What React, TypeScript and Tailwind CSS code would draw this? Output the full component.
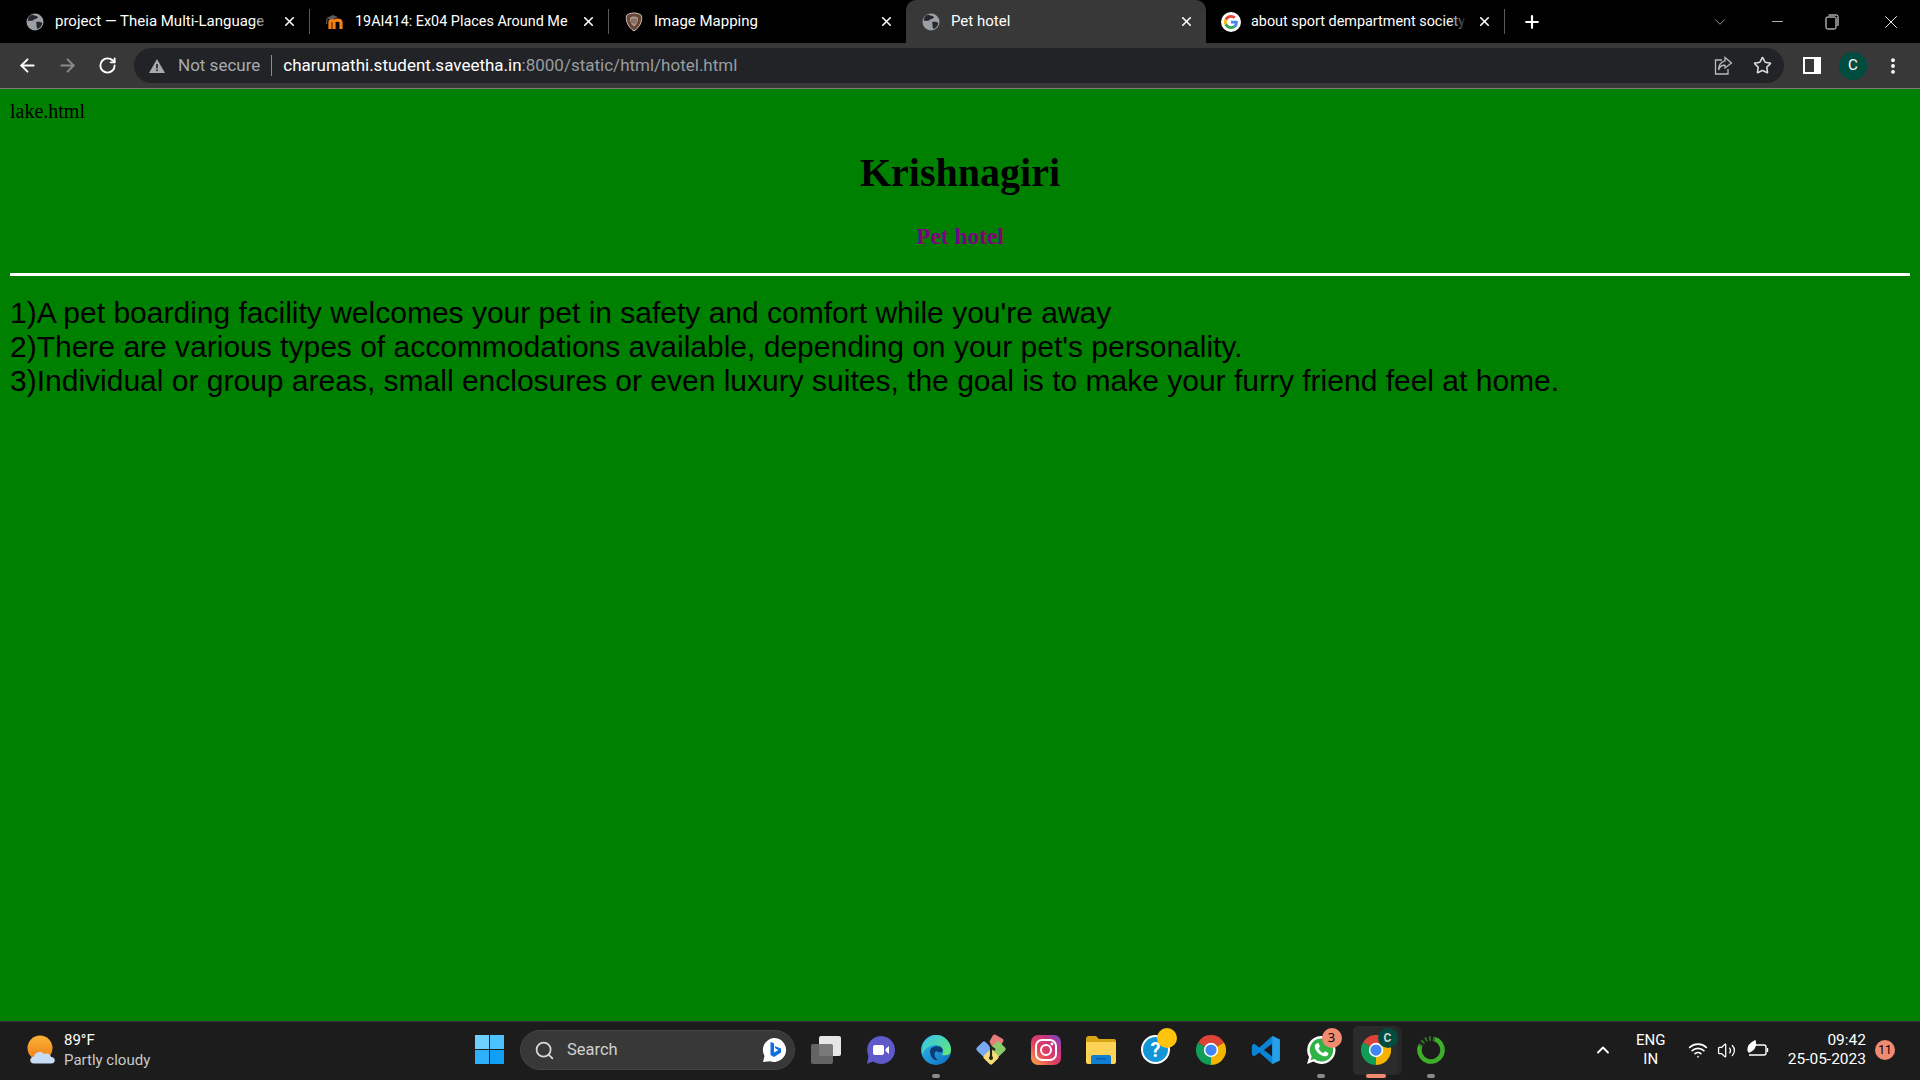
import React from "react";
import { ArrowLeft, ArrowRight, RotateCw, Star, X, Plus, ChevronDown, Minus, ChevronUp, Search, MoreVertical, Wifi, Volume2 } from "lucide-react";

const Globe = () => (
  <svg width="18" height="18" viewBox="0 0 18 18">
    <circle cx="9" cy="9" r="8.5" fill="#9aa0a6" />
    <path d="M6 1.5 C8 3 11 2.5 12 4 C11.5 6 9 5.5 7.5 7 C6 8.5 4 7.5 2 8 C1.5 5 3.5 2.5 6 1.5Z" fill="#26282b" />
    <path d="M10 9 C12 8.5 15 9 16.3 10 C16 13 14 15 11.5 16 C10 14 11 11.5 10 9Z" fill="#26282b" />
  </svg>
);
const Moodle = () => (
  <svg width="20" height="18" viewBox="0 0 20 18">
    <path d="M1 5 L8 2 L13 4 L7 7Z" fill="#5a5a5a" />
    <path d="M2 6 L1.5 11" stroke="#6b6b6b" strokeWidth="1" />
    <path d="M5 16 V9 C5 7 9 7 9 9 V16 M9 9 C9 6.5 16 6.5 16 9.5 V16" fill="none" stroke="#f98012" strokeWidth="3.2" />
  </svg>
);
const Shield = () => (
  <svg width="18" height="20" viewBox="0 0 18 20">
    <path d="M9 1 C12 1 15 2 16.5 3.5 C17.5 9 15 15 9 19 C3 15 .5 9 1.5 3.5 C3 2 6 1 9 1Z" fill="#6a4436" stroke="#cfc6c0" strokeWidth="1" />
    <path d="M9 4.5 C11 4.5 12.5 5 13 6 C13.5 9 12 12 9 14.5 C6 12 4.5 9 5 6 C5.5 5 7 4.5 9 4.5Z" fill="#a99a92" />
    <path d="M7 6.5 V11 M9 6.5 V12 M11 6.5 V11" stroke="#6a4436" strokeWidth="1" />
  </svg>
);
const GoogleG = () => (
  <svg width="20" height="20" viewBox="0 0 48 48">
    <circle cx="24" cy="24" r="24" fill="#fff" />
    <g transform="translate(7 7) scale(.708)">
      <path fill="#EA4335" d="M24 9.5c3.5 0 6.7 1.2 9.2 3.6l6.9-6.9C35.9 2.4 30.5 0 24 0 14.6 0 6.5 5.4 2.6 13.2l8 6.2C12.4 13.7 17.7 9.5 24 9.5z" />
      <path fill="#4285F4" d="M46.98 24.55c0-1.57-.15-3.09-.38-4.55H24v9.02h12.94c-.58 2.96-2.26 5.48-4.78 7.18l7.73 6c4.51-4.18 7.09-10.36 7.09-17.65z" />
      <path fill="#FBBC05" d="M10.53 28.59c-.48-1.45-.76-2.99-.76-4.59s.27-3.14.76-4.59l-7.98-6.19C.92 16.46 0 20.12 0 24c0 3.88.92 7.54 2.56 10.78l7.97-6.19z" />
      <path fill="#34A853" d="M24 48c6.48 0 11.93-2.13 15.89-5.81l-7.73-6c-2.15 1.45-4.92 2.3-8.16 2.3-6.26 0-11.57-4.22-13.47-9.91l-7.98 6.19C6.51 42.62 14.62 48 24 48z" />
    </g>
  </svg>
);
const ChromeIcon = ({ size = 30 }: { size?: number }) => (
  <svg width={size} height={size} viewBox="0 0 48 48">
    <path fill="#db4437" d="M24 24 L44.8 12 A24 24 0 0 0 3.2 12 Z" />
    <path fill="#0f9d58" d="M24 24 L3.2 12 A24 24 0 0 0 24 48 Z" />
    <path fill="#f4b400" d="M24 24 L24 48 A24 24 0 0 0 44.8 12 Z" />
    <circle cx="24" cy="24" r="11.5" fill="#fff" />
    <circle cx="24" cy="24" r="9" fill="#4285f4" />
  </svg>
);
const Sep = () => <div className="w-px h-[25px] bg-[#5a5a5a] shrink-0" />;

function Tab({ icon, title, active, fade, width, small }: { icon: React.ReactNode; title: string; active?: boolean; fade?: boolean; width: string; small?: boolean }) {
  return (
    <div className={`relative flex items-center h-[43px] shrink-0 ${width} pl-[14px] pr-[12px] ${active ? "bg-[#383838] rounded-t-[10px]" : ""}`}>
      <div className="w-[22px] flex justify-center shrink-0">{icon}</div>
      <div className={`relative ml-[9px] flex-1 overflow-hidden whitespace-nowrap text-white ${small ? "text-[14.4px]" : "text-[15px]"}`}>
        {title}
        {fade && <div className="absolute right-0 top-0 bottom-0 w-[18px] bg-gradient-to-r from-transparent to-black" />}
      </div>
      <X size={15} strokeWidth={2.6} className="ml-[10px] shrink-0 text-white" />
    </div>
  );
}

function Cell({ children, dot, accent }: { children: React.ReactNode; dot?: boolean; accent?: boolean }) {
  return (
    <div className="relative flex items-center justify-center w-[55px] h-[58px] pb-[3px] shrink-0">
      {accent && <div className="absolute left-[5px] top-[4px] w-[45px] h-[49px] rounded-[5px] bg-[#2b2b2b] shadow-[4px_0_0_#262626]" />}
      <div className="relative flex items-center justify-center">{children}</div>
      {dot && <div className="absolute bottom-[2px] left-[23.5px] w-[8px] h-[4px] rounded-full bg-[#8a8a8a]" />}
      {accent && <div className="absolute bottom-[2px] left-[17.5px] w-[20px] h-[4px] rounded-full bg-[#f08a70]" />}
    </div>
  );
}

export default function App() {
  return (
    <div className="flex flex-col w-[1920px] h-[1080px] overflow-hidden font-['Roboto',sans-serif]">
      {/* tab strip */}
      <div className="flex items-center h-[43px] bg-black shrink-0 pl-[10px]">
        <Tab width="w-[299px]" icon={<Globe />} title="project — Theia Multi-Language" fade />
        <Sep />
        <Tab width="w-[298px]" icon={<Moodle />} title="19AI414: Ex04 Places Around Me" small />
        <Sep />
        <Tab width="w-[297px]" icon={<Shield />} title="Image Mapping" />
        <Tab width="w-[300px]" icon={<Globe />} title="Pet hotel" active />
        <Tab width="w-[298px]" icon={<GoogleG />} title="about sport dempartment society" small fade />
        <Sep />
        <Plus size={20} strokeWidth={2.6} className="ml-[17px] text-white" />
        <div className="flex-1" />
        <ChevronDown size={18} strokeWidth={1} className="text-[#c8c8c8] mr-[40px]" />
        <Minus size={17} strokeWidth={1} className="text-white mr-[39px]" />
        <svg width="14" height="16" viewBox="0 0 14 16" className="mr-[41px]" fill="none" stroke="#fff" strokeWidth="1">
          <rect x="1" y="3" width="10" height="12" rx="1.5" />
          <path d="M3.5 1 H11.5 Q13 1 13 2.5 V12" />
        </svg>
        <X size={22} strokeWidth={1} className="text-white mr-[18px]" />
      </div>

      {/* toolbar */}
      <div className="flex items-center h-[45px] bg-[#383838] shrink-0">
        <ArrowLeft size={21} strokeWidth={2.2} className="ml-[17px] text-white" />
        <ArrowRight size={21} strokeWidth={2.2} className="ml-[19px] text-[#8b8b8b]" />
        <RotateCw size={19} strokeWidth={2.4} className="ml-[20px] text-white" />
        <div className="flex items-center ml-[17px] w-[1650px] h-[35px] rounded-full bg-[#212327] shrink-0">
          <svg width="16" height="14" viewBox="0 0 16 14" className="ml-[15px]">
            <path d="M8 0 L16 14 H0Z" fill="#a8abae" />
            <rect x="7.2" y="5" width="1.6" height="4.5" fill="#212327" />
            <rect x="7.2" y="10.5" width="1.6" height="1.6" fill="#212327" />
          </svg>
          <span className="ml-[13px] text-[17px] text-[#a8abae]">Not secure</span>
          <div className="ml-[11px] w-px h-[21px] bg-[#8b8d90]" />
          <span className="ml-[11px] text-[17px] text-white">
            charumathi.student.saveetha.in<span className="text-[#9a9da0]">:8000/static/html/hotel.html</span>
          </span>
          <div className="flex-1" />
          <svg width="20" height="20" viewBox="0 0 20 20" fill="none" stroke="#b8babc" strokeWidth="1.3" className="mr-[20px]">
            <path d="M9 4 H2.5 V18 H15 V13" />
            <path d="M12 1.5 L18.5 7 L12 12 V9.3 C8.5 9 6.5 11 5.5 14 C5.5 9.5 8 5.5 12 4.8Z" />
          </svg>
          <Star size={19} strokeWidth={2} className="mr-[12px] text-[#dcdcdc]" />
        </div>
        <div className="ml-[19px] w-[18px] h-[17px] bg-white flex items-center pl-[2px] shrink-0">
          <div className="w-[9px] h-[13px] bg-[#383838]" />
        </div>
        <div className="ml-[18px] w-[28px] h-[28px] rounded-full bg-[#004d40] flex items-center justify-center text-[15px] text-white shrink-0">C</div>
        <MoreVertical size={20} strokeWidth={2.6} className="ml-[16px] text-white shrink-0" />
      </div>
      <div className="h-px bg-[#7a7a7a] shrink-0" />

      {/* page */}
      <div className="flex-1 bg-[#008000] px-[10px] pt-[7px] font-['Liberation_Serif',serif] text-[20px] text-black">
        <div>lake.html</div>
        <h1 className="text-center font-bold text-[40px] mt-[17px] mb-[16px]">Krishnagiri</h1>
        <h3 className="text-center font-bold text-[23.4px] text-[#800080] mb-[19px]">Pet hotel</h3>
        <div className="h-[3px] bg-white" />
        <p className="mt-[20px] font-['Liberation_Sans',sans-serif] text-[30px] leading-[34px]">
          1)A pet boarding facility welcomes your pet in safety and comfort while you're away
          <br />
          2)There are various types of accommodations available, depending on your pet's personality.
          <br />
          3)Individual or group areas, small enclosures or even luxury suites, the goal is to make your furry friend feel at home.
        </p>
      </div>

      {/* taskbar */}
      <div className="flex items-center h-[59px] bg-[#1c1c1c] shrink-0 border-t border-[#333333]">
        <div className="flex items-center w-[462px] shrink-0 pl-[27px] mb-[2px]">
          <svg width="30" height="30" viewBox="0 0 30 30">
            <defs>
              <linearGradient id="sun" x1="0" y1="0" x2="0" y2="1">
                <stop offset="0" stopColor="#f9b233" />
                <stop offset="1" stopColor="#ee7e1c" />
              </linearGradient>
            </defs>
            <circle cx="13" cy="13" r="12.5" fill="url(#sun)" />
            <path d="M7 28.5 C2 28.5 2 22 7 21.5 C8 17 14 15.5 17 19 C20 17.5 24 19.5 24 22 C29 22 29 28.5 24.5 28.5Z" fill="#c9dcf6" />
          </svg>
          <div className="ml-[7px] flex flex-col text-[15px] leading-[20px]">
            <span className="text-white">89°F</span>
            <span className="text-[#c9c9c9]">Partly cloudy</span>
          </div>
        </div>
        <Cell>
          <div className="grid grid-cols-2 gap-[1.5px] w-[29px] h-[29px]">
            <div className="bg-[#6fd0ff]" />
            <div className="bg-[#4cc2ff]" />
            <div className="bg-[#2fb0fb]" />
            <div className="bg-[#0fa0f5]" />
          </div>
        </Cell>
        <div className="flex items-center ml-[3px] mr-[3px] mb-[2px] w-[275px] h-[40px] rounded-full bg-[#383838] border border-[#444444] shrink-0">
          <Search size={21} strokeWidth={2} className="ml-[13px] text-[#d8d8d8]" />
          <span className="ml-[12px] text-[16.5px] text-[#d0d0d0]">Search</span>
          <div className="flex-1" />
          <svg width="26" height="26" viewBox="0 0 26 26" className="mr-[7px]">
            <path d="M13 1 A12 12 0 1 1 9 24.3 L2 25 L3.5 19 A12 12 0 0 1 13 1Z" fill="#fff" />
            <path d="M9.5 5 L13 6.2 V15.5 L17.5 13 L14.5 11.5 L13.5 9 L20 11.5 V15.5 L13 20 L9.5 18Z" fill="#0c6fe0" />
          </svg>
        </div>
        <Cell>
          <div className="relative w-[30px] h-[28px]">
            <div className="absolute right-0 top-0 w-[22px] h-[20px] bg-[#e6e6e6] rounded-[2px]" />
            <div className="absolute left-0 bottom-0 w-[22px] h-[20px] bg-[#6d6d6d]/90 rounded-[2px]" />
          </div>
        </Cell>
        <Cell>
          <svg width="30" height="30" viewBox="0 0 30 30">
            <path d="M15 1 A14 14 0 1 1 7 26.5 L1 29 L2.5 21 A14 14 0 0 1 15 1Z" fill="#5f59c9" />
            <rect x="7" y="10" width="11" height="10" rx="2" fill="#fff" />
            <path d="M19.5 14 L23 11 V19 L19.5 16Z" fill="#fff" />
          </svg>
        </Cell>
        <Cell dot>
          <svg width="30" height="30" viewBox="0 0 30 30">
            <defs>
              <linearGradient id="edgeA" x1="0" y1="0" x2="1" y2="1">
                <stop offset="0" stopColor="#35c1f1" />
                <stop offset="1" stopColor="#0a6bc0" />
              </linearGradient>
              <linearGradient id="edgeB" x1="0" y1="0" x2="1" y2="1">
                <stop offset="0" stopColor="#35c1f1" />
                <stop offset="1" stopColor="#66eb6e" />
              </linearGradient>
            </defs>
            <circle cx="15" cy="15" r="15" fill="url(#edgeA)" />
            <path d="M15 0 A15 15 0 0 1 30 15 C30 20 25 21 21 20 C24 16 21 10 15 10 C9 10 4 13 1 19 C0 8 7 0 15 0Z" fill="url(#edgeB)" />
            <path d="M9 16 C9 11 20 9 22 15 C22 17 19 18 17 17 C14 14 11 21 17 25 C12 26 9 21 9 16Z" fill="#0c3d75" />
          </svg>
        </Cell>
        <Cell>
          <svg width="32" height="32" viewBox="0 0 32 32">
            <rect x="15" y="2" width="12" height="12" rx="2" transform="rotate(30 21 8)" fill="#e77c7c" />
            <rect x="3" y="9" width="12" height="12" rx="2" transform="rotate(45 9 15)" fill="#78a9f5" />
            <rect x="17" y="9" width="12" height="12" rx="2" transform="rotate(45 23 15)" fill="#8ccb6a" />
            <rect x="10" y="17" width="12" height="12" rx="2" transform="rotate(45 16 23)" fill="#f8dc78" />
            <path d="M16 24 V13 L13 7 M16 13 L20 16" stroke="#222" strokeWidth="2.2" fill="none" />
            <circle cx="16" cy="24" r="2" fill="#222" />
          </svg>
        </Cell>
        <Cell>
          <svg width="30" height="30" viewBox="0 0 30 30">
            <defs>
              <linearGradient id="ig" x1="0" y1="1" x2="1" y2="0">
                <stop offset="0" stopColor="#fbb040" />
                <stop offset=".4" stopColor="#e4405f" />
                <stop offset=".75" stopColor="#c13584" />
                <stop offset="1" stopColor="#5b51d8" />
              </linearGradient>
            </defs>
            <rect width="30" height="30" rx="7" fill="url(#ig)" />
            <rect x="5" y="5" width="20" height="20" rx="6" fill="none" stroke="#fff" strokeWidth="2" />
            <circle cx="15" cy="15" r="5" fill="none" stroke="#fff" strokeWidth="2" />
            <circle cx="21" cy="9" r="1.4" fill="#fff" />
          </svg>
        </Cell>
        <Cell>
          <svg width="30" height="28" viewBox="0 0 30 28">
            <path d="M0 3 Q0 0 3 0 H10 L13 3 H28 Q30 3 30 5 V7 H0Z" fill="#d9a514" />
            <path d="M0 6 H30 V26 Q30 28 28 28 H2 Q0 28 0 26Z" fill="#fcd354" />
            <path d="M5 28 V21 Q5 19 7 19 H23 Q25 19 25 21 V28Z" fill="#0f7fd6" />
            <rect x="10" y="22" width="10" height="1.5" fill="#0a5ba0" />
          </svg>
        </Cell>
        <Cell>
          <div className="relative">
            <div className="w-[29px] h-[29px] rounded-full bg-[#1296d8] border-2 border-white flex items-center justify-center text-white font-bold text-[20px]">?</div>
            <div className="absolute right-[-7px] top-[-7px] w-[20px] h-[20px] rounded-full bg-[#ffc30b]" />
          </div>
        </Cell>
        <Cell>
          <ChromeIcon />
        </Cell>
        <Cell>
          <svg width="30" height="30" viewBox="0 0 100 100">
            <path d="M71 3 L96 15 V85 L71 97 L28 58 L11 71 L3 66 V34 L11 29 L28 42Z M71 28 L43 50 L71 72Z" fill="#0a84d6" fillRule="evenodd" />
            <path d="M71 3 L96 15 V85 L71 97Z" fill="#27a0ea" />
          </svg>
        </Cell>
        <Cell dot>
          <div className="relative">
            <svg width="30" height="30" viewBox="0 0 30 30">
              <path d="M15 1 A14 14 0 1 1 7.5 26.5 L1 29 L3 22 A14 14 0 0 1 15 1Z" fill="#fff" />
              <path d="M15 3.5 A11.5 11.5 0 1 1 8.5 24 L4.5 25.2 L5.7 21.4 A11.5 11.5 0 0 1 15 3.5Z" fill="#2fb344" />
              <path d="M10.5 8.5 L12.5 8 L14 11.5 L12.5 13.2 C13.5 15.5 15 17 17.3 18 L19 16.2 L22.5 18 L22 20 C20.5 22 17 21.5 14 19.5 C10.5 17 8 13 9 10Z" fill="#fff" />
            </svg>
            <div className="absolute right-[-6px] top-[-7px] w-[20px] h-[20px] rounded-full bg-[#f08a70] flex items-center justify-center text-[13px] text-black font-['Open_Sans',sans-serif]">3</div>
          </div>
        </Cell>
        <Cell accent>
          <div className="relative">
            <ChromeIcon />
            <div className="absolute right-[-7px] top-[-7px] w-[20px] h-[20px] rounded-full bg-[#004d40] flex items-center justify-center text-[12px] font-bold text-[#c8d8d4]">C</div>
          </div>
        </Cell>
        <Cell dot>
          <svg width="28" height="28" viewBox="0 0 28 28">
            <circle cx="14" cy="14" r="11.5" fill="none" stroke="#3fae2a" strokeWidth="4.5" strokeDasharray="54 18" transform="rotate(-70 14 14)" />
            <circle cx="14" cy="14" r="11.5" fill="none" stroke="#3fae2a" strokeWidth="4.5" strokeDasharray="2 2" opacity=".6" transform="rotate(180 14 14)" pathLength="72" />
          </svg>
        </Cell>

        <div className="flex-1" />
        <div className="flex items-center mb-[2px]">
          <ChevronUp size={20} strokeWidth={2.2} className="text-white mr-[21px]" />
          <div className="w-[34px] text-center text-[15px] leading-[19px] text-white mr-[20px]">
            ENG
            <br />
            IN
          </div>
          <Wifi size={20} strokeWidth={2} className="text-white mr-[9px]" />
          <Volume2 size={19} strokeWidth={1.6} className="text-white mr-[11px]" />
          <svg width="22" height="20" viewBox="0 0 22 20" fill="none" stroke="#fff" strokeWidth="1.4" className="mr-[19px]">
            <path d="M7 5 H17 Q19 5 19 7 V13 Q19 15 17 15 H2" />
            <path d="M20.5 8 V12" />
            <path d="M1 10 C1 5 4 3 8 1 C9 5 8 10 2 12Z" fill="#fff" />
          </svg>
          <div className="text-right text-[15.5px] leading-[19px] text-white">
            09:42
            <br />
            25-05-2023
          </div>
          <div className="ml-[9px] mr-[25px] w-[20px] h-[20px] rounded-full bg-[#f08a70] flex items-center justify-center text-[12px] text-black">11</div>
        </div>
      </div>
    </div>
  );
}
